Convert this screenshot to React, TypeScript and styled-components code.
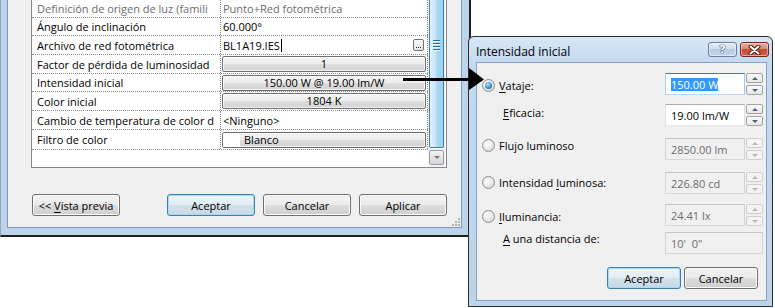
import React from 'react'
import styled, { createGlobalStyle, css } from 'styled-components'

const GlobalStyle = createGlobalStyle`
  html, body {
    margin: 0;
    padding: 0;
    background: #fff;
  }
  body {
    font-family: 'Open Sans', 'Noto Sans', sans-serif;
    font-size: 11px;
    color: #000;
  }
`

const Desktop = styled.div`
  position: relative;
  width: 775px;
  height: 308px;
  overflow: hidden;
`

// ---------- main (background) window ----------

const MainWindow = styled.div`
  width: 471px;
  height: 237px;
  box-sizing: border-box;
  background: #bcd3ea;
  border-left: 1px solid #8fa9c5;
  border-right: 2px solid #1f1f1f;
  border-bottom: 2px solid #1f1f1f;
  padding: 0 7px 7px 6px;
`

const Client = styled.div`
  height: 100%;
  box-sizing: border-box;
  background: #f0f0f0;
  border: 1px solid #7f9ab7;
  border-top: none;
  padding: 0 14px 0 23px;
  display: flex;
  flex-direction: column;
`

const ListBox = styled.div`
  height: 168px;
  box-sizing: border-box;
  background: #fff;
  border: 1px solid #828790;
  border-top: none;
  display: flex;
  overflow: hidden;
`

const PropTable = styled.div`
  width: 396px;
  margin-top: -1px;
  display: flex;
  flex-direction: column;
`

const PropRow = styled.div<{ h: number }>`
  display: grid;
  grid-template-columns: 189px 207px;
  height: ${p => p.h}px;
  flex: none;
  border-bottom: 1px dotted #8c8c8c;
`

const PropLabel = styled.div<{ muted?: boolean }>`
  display: flex;
  align-items: center;
  padding-left: 5px;
  border-right: 1px dotted #8c8c8c;
  white-space: nowrap;
  overflow: hidden;
  color: ${p => (p.muted ? '#6d6d6d' : '#000')};
`

const PropValue = styled.div<{ muted?: boolean }>`
  display: flex;
  align-items: center;
  padding: 0 1px;
  border-right: 1px dotted #8c8c8c;
  white-space: nowrap;
  overflow: hidden;
  color: ${p => (p.muted ? '#6d6d6d' : '#000')};
`

const ValueText = styled.span`
  padding-left: 1px;
`

const Caret = styled.span`
  display: inline-block;
  width: 1px;
  height: 13px;
  background: #000;
  margin-left: 1px;
  vertical-align: -2px;
`

const BrowseButton = styled.span`
  margin-left: auto;
  margin-right: 2px;
  width: 9px;
  height: 8px;
  border: 1px solid #707070;
  border-radius: 2px;
  background: linear-gradient(#fafafa, #e6e6e6);
  display: flex;
  align-items: flex-end;
  justify-content: center;
  gap: 1px;
  padding-bottom: 2px;
  box-sizing: content-box;

  i {
    width: 1px;
    height: 1px;
    background: #202020;
  }
`

const CellButton = styled.div`
  flex: 1;
  height: 14px;
  border: 1px solid #6f6f6f;
  border-radius: 2px;
  background: linear-gradient(#f4f4f4, #ececec 50%, #dedede 51%, #d2d2d2);
  box-shadow: inset 0 0 0 1px rgba(255, 255, 255, 0.7);
  display: flex;
  align-items: center;
  justify-content: center;
  line-height: 14px;
`

const SwatchButton = styled(CellButton)`
  justify-content: flex-start;
  overflow: hidden;
`

const Swatch = styled.span`
  width: 17px;
  height: 100%;
  background: #fff;
  margin-right: 4px;
`

const ScrollBar = styled.div`
  width: 17px;
  background: #f2f2f2;
  display: flex;
  flex-direction: column;
`

const Thumb = styled.div`
  flex: 1;
  margin: 0 1px 2px 1px;
  border: 1px solid #3c7fb1;
  border-top: none;
  border-radius: 0 0 2px 2px;
  background: linear-gradient(to right, #e3f4fc, #c4e5f8 45%, #a9d7f3 55%, #9cd0f0);
  display: flex;
  flex-direction: column;
  align-items: center;
  padding-top: 40px;
  gap: 1px;

  i {
    width: 7px;
    height: 1px;
    background: #2e6e9e;
    box-shadow: 0 1px 0 #e8f6fd;
    margin-bottom: 1px;
  }
`

const ArrowButton = styled.div`
  height: 13px;
  margin: 0 1px 2px 1px;
  border: 1px solid #9b9b9b;
  border-radius: 2px;
  background: linear-gradient(#f3f3f3, #e4e4e4 50%, #d6d6d6);
  display: flex;
  align-items: center;
  justify-content: center;

  &::after {
    content: '';
    border-left: 3px solid transparent;
    border-right: 3px solid transparent;
    border-top: 3px solid #777;
  }
`

const ButtonBar = styled.div`
  display: flex;
  margin-top: 26px;
  padding-left: 1px;
`

const buttonFace = css`
  height: 22px;
  box-sizing: border-box;
  border: 1px solid #707070;
  border-radius: 3px;
  background: linear-gradient(#f2f2f2, #ebebeb 50%, #dddddd 51%, #cfcfcf);
  box-shadow: inset 0 0 0 1px #fcfcfc;
  font: inherit;
  color: #000;
  padding: 0;
  display: flex;
  align-items: center;
  justify-content: center;
`

const WinButton = styled.button<{ w: number; gap?: number; primary?: boolean }>`
  ${buttonFace}
  width: ${p => p.w}px;
  margin-left: ${p => p.gap || 0}px;
  ${p =>
    p.primary &&
    css`
      border-color: #3c7fb1;
      box-shadow: inset 0 0 0 1px #9fdcf7;
      background: linear-gradient(#edf4f9, #e3edf4 50%, #d3e1eb 51%, #c8d8e4);
    `}
`

const Mnemonic = styled.u`
  text-decoration: underline;
  text-underline-offset: 2px;
`

const GripRow = styled.div`
  margin-top: auto;
  margin-right: -14px;
  display: flex;
  justify-content: flex-end;
`

// ---------- dialog ----------

const Dialog = styled.div`
  position: absolute;
  left: 468px;
  top: 36px;
  width: 305px;
  height: 271px;
  box-sizing: border-box;
  border: 1px solid #2d2d2d;
  border-radius: 6px 6px 0 0;
  background: linear-gradient(#d8e7f6, #c4daf0 24px, #bcd3ea);
  display: flex;
  flex-direction: column;
`

const TitleBar = styled.div`
  height: 25px;
  flex: none;
  display: flex;
  align-items: flex-start;
  padding: 0 3px 0 7px;
`

const TitleText = styled.div`
  flex: 1;
  padding-top: 7px;
  font-size: 12px;
  line-height: 15px;
`

const CaptionButton = styled.div<{ close?: boolean }>`
  width: 29px;
  height: 15px;
  margin-top: 5px;
  margin-left: 3px;
  box-sizing: border-box;
  border: 1px solid ${p => (p.close ? '#6e2a1f' : '#6b7f99')};
  border-radius: 3px;
  background: ${p =>
    p.close
      ? 'linear-gradient(#eab0a2, #d98774 45%, #c44a31 50%, #d0654c)'
      : 'linear-gradient(#e6eef8, #cfdcec 45%, #b8cce3 50%, #c3d6ea)'};
  box-shadow: inset 0 0 0 1px rgba(255, 255, 255, 0.45);
  display: flex;
  align-items: center;
  justify-content: center;
  color: #fff;
  font-family: 'DejaVu Sans', sans-serif;
  font-weight: bold;
  font-size: 11px;
  line-height: 13px;
  text-shadow: 0 0 1px #34465c, 0 0 1px #34465c, 0 0 1px #34465c;
`

const DialogBody = styled.div`
  flex: 1;
  padding: 0 5px 5px 7px;
  display: flex;
`

const DialogClient = styled.div`
  flex: 1;
  background: #f0f0f0;
  border: 1px solid #8aa3c0;
  padding: 10px 3px 0 5px;
  display: flex;
  flex-direction: column;
`

const FormRow = styled.div<{ gap: number }>`
  display: flex;
  align-items: flex-start;
  height: 22px;
  margin-top: ${p => p.gap}px;
`

const FieldLabel = styled.div<{ lift: number; indent?: boolean }>`
  flex: 1;
  display: flex;
  align-items: center;
  gap: 4px;
  line-height: 15px;
  margin-top: ${p => p.lift}px;
  padding-left: ${p => (p.indent ? 21 : 0)}px;
`

const Radio = styled.span<{ checked?: boolean }>`
  width: 13px;
  height: 13px;
  box-sizing: border-box;
  border-radius: 50%;
  border: 1px solid #8e8f8f;
  background: radial-gradient(circle at 40% 35%, #ffffff, #e6e6e6 55%, #c9c9c9);
  display: flex;
  align-items: center;
  justify-content: center;

  &::after {
    content: '';
    display: ${p => (p.checked ? 'block' : 'none')};
    width: 7px;
    height: 7px;
    border-radius: 50%;
    background: radial-gradient(circle at 40% 35%, #b6e6fc, #3391d2 55%, #0c4a85);
  }
`

const Field = styled.div`
  display: flex;
  gap: 1px;
  width: 98px;
  height: 22px;
`

const TextBox = styled.div<{ state?: 'focus' | 'disabled' }>`
  flex: 1;
  box-sizing: border-box;
  border: 1px solid;
  border-color: #abadb3 #dbdfe6 #e3e9ef #e2e3ea;
  background: #fff;
  padding-left: 5px;
  display: flex;
  align-items: center;
  white-space: pre;
  ${p =>
    p.state === 'focus' &&
    css`
      border-color: #3d7bad #a4c9e3 #b7d9ed #b5cfe7;
    `}
  ${p =>
    p.state === 'disabled' &&
    css`
      background: #f0f0f0;
      border-color: #c4c4c4 #d4d4d4 #d8d8d8 #d4d4d4;
      color: #6d6d6d;
    `}
`

const Selected = styled.span`
  background: #3399ff;
  color: #fff;
  line-height: 13px;
`

const Spinner = styled.div`
  width: 17px;
  display: flex;
  flex-direction: column;
  justify-content: space-between;
`

const SpinButton = styled.div<{ down?: boolean; disabled?: boolean }>`
  height: 10px;
  box-sizing: border-box;
  border: 1px solid ${p => (p.disabled ? '#cfcfcf' : '#a3a3a3')};
  border-radius: 2px;
  background: ${p => (p.disabled ? '#f4f4f4' : 'linear-gradient(#fbfbfb, #e6e6e6)')};
  display: flex;
  align-items: center;
  justify-content: center;

  &::after {
    content: '';
    border-left: 3px solid transparent;
    border-right: 3px solid transparent;
    ${p =>
      p.down
        ? `border-top: 3px solid ${p.disabled ? '#b5b5b5' : '#4d6185'};`
        : `border-bottom: 3px solid ${p.disabled ? '#b5b5b5' : '#4d6185'};`}
  }
`

const DialogButtons = styled.div`
  display: flex;
  justify-content: flex-end;
  gap: 3px;
  margin-top: 13px;
  padding-right: 5px;
`

const ArrowOverlay = styled.svg`
  position: absolute;
  left: 400px;
  top: 64px;
`

const rows = [
  { h: 18, label: 'Definición de origen de luz (famili', muted: true, value: <ValueText>Punto+Red fotométrica</ValueText> },
  { h: 17, label: 'Ángulo de inclinación', value: <ValueText>60.000°</ValueText> },
  {
    h: 18,
    label: 'Archivo de red fotométrica',
    value: (
      <>
        <ValueText>BL1A19.IES<Caret /></ValueText>
        <BrowseButton><i /><i /><i /></BrowseButton>
      </>
    ),
  },
  { h: 18, label: 'Factor de pérdida de luminosidad', value: <CellButton>1</CellButton> },
  { h: 17, label: 'Intensidad inicial', value: <CellButton>150.00 W @ 19.00 lm/W</CellButton> },
  { h: 18, label: 'Color inicial', value: <CellButton>1804 K</CellButton> },
  { h: 18, label: 'Cambio de temperatura de color d', value: <ValueText>&lt;Ninguno&gt;</ValueText> },
  { h: 19, label: 'Filtro de color', value: <SwatchButton><Swatch />Blanco</SwatchButton> },
]

function Spin({ disabled }: { disabled?: boolean }) {
  return (
    <Spinner>
      <SpinButton disabled={disabled} />
      <SpinButton disabled={disabled} down />
    </Spinner>
  )
}

export default function App() {
  return (
    <Desktop>
      <GlobalStyle />

      <MainWindow>
        <Client>
          <ListBox>
            <PropTable>
              {rows.map(r => (
                <PropRow key={r.label} h={r.h}>
                  <PropLabel muted={r.muted}>{r.label}</PropLabel>
                  <PropValue muted={r.muted}>{r.value}</PropValue>
                </PropRow>
              ))}
            </PropTable>
            <ScrollBar>
              <Thumb><i /><i /><i /><i /></Thumb>
              <ArrowButton />
            </ScrollBar>
          </ListBox>

          <ButtonBar>
            <WinButton w={88}><span>&lt;&lt; <Mnemonic>V</Mnemonic>ista previa</span></WinButton>
            <WinButton w={88} gap={47} primary>Aceptar</WinButton>
            <WinButton w={88} gap={8}>Cancelar</WinButton>
            <WinButton w={88} gap={8}>Aplicar</WinButton>
          </ButtonBar>

          <GripRow>
            <svg width="10" height="10" viewBox="0 0 10 10">
              {[[7, 1], [4, 4], [7, 4], [1, 7], [4, 7], [7, 7]].map(([x, y]) => (
                <rect key={`${x}-${y}`} x={x} y={y} width="2" height="2" fill="#b2b2b2" />
              ))}
            </svg>
          </GripRow>
        </Client>
      </MainWindow>

      <Dialog>
        <TitleBar>
          <TitleText>Intensidad inicial</TitleText>
          <CaptionButton>?</CaptionButton>
          <CaptionButton close>
            <svg width="13" height="10" viewBox="0 0 13 10">
              <path d="M2.5 1.5 L10.5 8.5 M10.5 1.5 L2.5 8.5" stroke="#4a1c14" strokeWidth="4" strokeLinecap="round" />
              <path d="M2.5 1.5 L10.5 8.5 M10.5 1.5 L2.5 8.5" stroke="#fff" strokeWidth="2" strokeLinecap="round" />
            </svg>
          </CaptionButton>
        </TitleBar>
        <DialogBody>
          <DialogClient>
            <FormRow gap={0}>
              <FieldLabel lift={5}><Radio checked /><span><Mnemonic>V</Mnemonic>ataje:</span></FieldLabel>
              <Field>
                <TextBox state="focus"><Selected>150.00 W</Selected></TextBox>
                <Spin />
              </Field>
            </FormRow>
            <FormRow gap={9}>
              <FieldLabel lift={1} indent><span><Mnemonic>E</Mnemonic>ficacia:</span></FieldLabel>
              <Field>
                <TextBox>19.00 lm/W</TextBox>
                <Spin />
              </Field>
            </FormRow>
            <FormRow gap={12}>
              <FieldLabel lift={0}><Radio /><span>Flujo luminoso</span></FieldLabel>
              <Field>
                <TextBox state="disabled">2850.00 lm</TextBox>
                <Spin disabled />
              </Field>
            </FormRow>
            <FormRow gap={12}>
              <FieldLabel lift={3}><Radio /><span>Intensidad <Mnemonic>l</Mnemonic>uminosa:</span></FieldLabel>
              <Field>
                <TextBox state="disabled">226.80 cd</TextBox>
                <Spin disabled />
              </Field>
            </FormRow>
            <FormRow gap={10}>
              <FieldLabel lift={5}><Radio /><span><Mnemonic>I</Mnemonic>luminancia:</span></FieldLabel>
              <Field>
                <TextBox state="disabled">24.41 lx</TextBox>
                <Spin disabled />
              </Field>
            </FormRow>
            <FormRow gap={6}>
              <FieldLabel lift={-1} indent><span><Mnemonic>A</Mnemonic> una distancia de:</span></FieldLabel>
              <Field>
                <TextBox state="disabled">10'  0"</TextBox>
              </Field>
            </FormRow>
            <DialogButtons>
              <WinButton w={74} primary>Aceptar</WinButton>
              <WinButton w={74}>Cancelar</WinButton>
            </DialogButtons>
          </DialogClient>
        </DialogBody>
      </Dialog>

      <ArrowOverlay width="90" height="30" viewBox="0 0 90 30">
        <rect x="3" y="14" width="68" height="3" fill="#000" />
        <polygon points="69,4 84,15.5 69,26" fill="#000" />
      </ArrowOverlay>
    </Desktop>
  )
}
